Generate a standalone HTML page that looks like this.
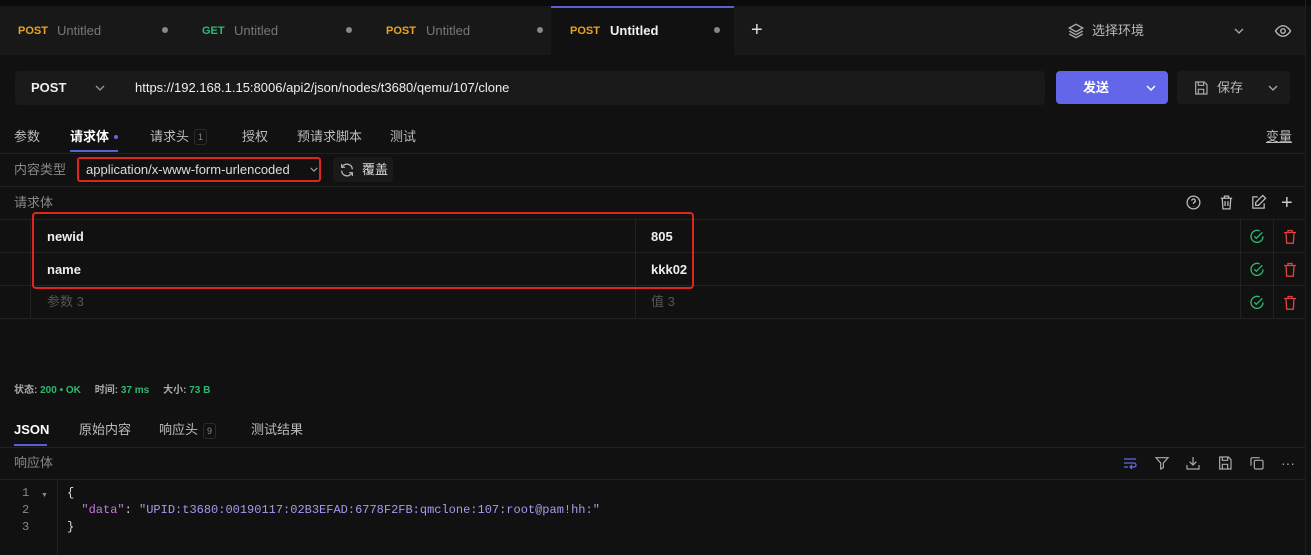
<!DOCTYPE html>
<html><head><meta charset="utf-8"><style>
*{box-sizing:border-box;margin:0;padding:0}
body{width:1311px;height:555px;background:#111111;font-family:"Liberation Sans","Noto Sans CJK SC",sans-serif;color:#d0d0d0;position:relative;overflow:hidden;font-size:13px}
.a{position:absolute;white-space:nowrap;line-height:15px}
.hl{position:absolute;height:1px;background:#222}
.vl{position:absolute;width:1px;background:#222}
.m{font-family:"Liberation Mono","DejaVu Sans Mono",monospace}
svg{position:absolute}
</style></head><body>
<div class="a" style="left:0;top:0;width:1311px;height:6px;background:#0b0b0b"></div>
<div class="a" style="left:0;top:6px;width:1305px;height:49px;background:#181818"></div>
<div class="a" style="left:551px;top:6px;width:183px;height:49px;background:#111;border-top:2px solid #5b5fd6"></div>
<div class="vl" style="left:1305px;top:0;height:555px;background:#1e1e1e"></div>

<div class="a" style="left:18px;top:24px;font-size:11px;font-weight:bold;color:#e5a52a">POST</div>
<div class="a" style="left:57px;top:23px;color:#777">Untitled</div>
<div class="a" style="left:162px;top:27px;width:6px;height:6px;border-radius:3px;background:#888"></div>
<div class="a" style="left:202px;top:24px;font-size:11px;font-weight:bold;color:#2eb872">GET</div>
<div class="a" style="left:234px;top:23px;color:#777">Untitled</div>
<div class="a" style="left:346px;top:27px;width:6px;height:6px;border-radius:3px;background:#888"></div>
<div class="a" style="left:386px;top:24px;font-size:11px;font-weight:bold;color:#e5a52a">POST</div>
<div class="a" style="left:426px;top:23px;color:#777">Untitled</div>
<div class="a" style="left:537px;top:27px;width:6px;height:6px;border-radius:3px;background:#888"></div>
<div class="a" style="left:570px;top:24px;font-size:11px;font-weight:bold;color:#e5a52a">POST</div>
<div class="a" style="left:610px;top:23px;color:#f0f0f0;font-weight:bold">Untitled</div>
<div class="a" style="left:714px;top:27px;width:6px;height:6px;border-radius:3px;background:#888"></div>
<div class="a" style="left:751px;top:20px;font-size:20px;line-height:20px;color:#ddd">+</div>

<svg style="left:1067px;top:22px" width="18" height="18" viewBox="0 0 24 24" fill="none" stroke="#aaa" stroke-width="1.8"><path d="M12 3 3 8l9 5 9-5z"/><path d="M3 12l9 5 9-5"/><path d="M3 16l9 5 9-5"/></svg>
<div class="a" style="left:1092px;top:23px;color:#bbb">选择环境</div>
<svg style="left:1233px;top:26px" width="12" height="10" viewBox="0 0 12 10" fill="none" stroke="#aaa" stroke-width="1.3"><path d="M2 3l4 4 4-4"/></svg>
<svg style="left:1274px;top:22px" width="18" height="18" viewBox="0 0 24 24" fill="none" stroke="#bbb" stroke-width="1.8"><path d="M2 12s4-7 10-7 10 7 10 7-4 7-10 7S2 12 2 12z"/><circle cx="12" cy="12" r="3"/></svg>

<div class="a" style="left:15px;top:71px;width:1030px;height:34px;background:#1a1a1a;border-radius:4px"></div>
<div class="a" style="left:31px;top:80px;font-weight:bold;color:#eee">POST</div>
<svg style="left:94px;top:83px" width="12" height="10" viewBox="0 0 12 10" fill="none" stroke="#999" stroke-width="1.3"><path d="M2 3l4 4 4-4"/></svg>
<div class="a" style="left:135px;top:80px;color:#eee">https://192.168.1.15:8006/api2/json/nodes/t3680/qemu/107/clone</div>
<div class="a" style="left:1056px;top:71px;width:112px;height:33px;background:#6366e8;border-radius:4px"></div>
<div class="a" style="left:1083px;top:80px;color:#fff;font-weight:bold">发送</div>
<svg style="left:1145px;top:83px" width="12" height="10" viewBox="0 0 12 10" fill="none" stroke="#fff" stroke-width="1.5"><path d="M2 3l4 4 4-4"/></svg>
<div class="a" style="left:1177px;top:71px;width:113px;height:33px;background:#1a1a1a;border-radius:4px"></div>
<svg style="left:1193px;top:80px" width="16" height="16" viewBox="0 0 24 24" fill="none" stroke="#aaa" stroke-width="1.8"><path d="M4 3h13l4 4v14H4z"/><path d="M8 3v5h8V3M8 21v-7h8v7"/></svg>
<div class="a" style="left:1217px;top:80px;color:#bbb">保存</div>
<svg style="left:1267px;top:83px" width="12" height="10" viewBox="0 0 12 10" fill="none" stroke="#aaa" stroke-width="1.3"><path d="M2 3l4 4 4-4"/></svg>

<div class="a" style="left:14px;top:129px;color:#bbb">参数</div>
<div class="a" style="left:70px;top:129px;color:#fff;font-weight:bold">请求体</div>
<div class="a" style="left:114px;top:135px;width:4px;height:4px;border-radius:2px;background:#6366e8"></div>
<div class="a" style="left:70px;top:150px;width:48px;height:2px;background:#5b5fd6"></div>
<div class="a" style="left:150px;top:129px;color:#bbb">请求头</div>
<div class="a" style="left:194px;top:129px;width:13px;height:16px;border:1px solid #2a2a2a;border-radius:3px;font-size:9px;color:#888;text-align:center;line-height:14px">1</div>
<div class="a" style="left:242px;top:129px;color:#bbb">授权</div>
<div class="a" style="left:297px;top:129px;color:#bbb">预请求脚本</div>
<div class="a" style="left:390px;top:129px;color:#bbb">测试</div>
<div class="a" style="left:1266px;top:129px;color:#bbb;text-decoration:underline">变量</div>
<div class="hl" style="left:0;top:153px;width:1305px"></div>

<div class="a" style="left:14px;top:162px;color:#888">内容类型</div>
<div class="a" style="left:77px;top:157px;width:244px;height:25px;border:2px solid #e0251c;border-radius:3px"></div>
<div class="a" style="left:86px;top:162px;color:#ddd">application/x-www-form-urlencoded</div>
<svg style="left:309px;top:165px" width="10" height="9" viewBox="0 0 12 10" fill="none" stroke="#aaa" stroke-width="1.3"><path d="M2 3l4 4 4-4"/></svg>
<div class="a" style="left:333px;top:157px;width:60px;height:25px;background:#1a1a1a;border-radius:4px"></div>
<svg style="left:339px;top:162px" width="16" height="16" viewBox="0 0 24 24" fill="none" stroke="#bbb" stroke-width="1.8"><path d="M20 11A8 8 0 0 0 6 6L4 8M4 13a8 8 0 0 0 14 5l2-2"/><path d="M4 3v5h5M20 21v-5h-5"/></svg>
<div class="a" style="left:362px;top:162px;color:#ddd">覆盖</div>
<div class="hl" style="left:0;top:186px;width:1305px"></div>

<div class="a" style="left:14px;top:195px;color:#888">请求体</div>
<svg style="left:1185px;top:194px" width="17" height="17" viewBox="0 0 24 24" fill="none" stroke="#bbb" stroke-width="1.8"><circle cx="12" cy="12" r="9"/><path d="M9.5 9.5a2.5 2.5 0 1 1 3.5 2.3c-.6.3-1 .8-1 1.5V14M12 17v.5"/></svg>
<svg style="left:1218px;top:194px" width="17" height="17" viewBox="0 0 24 24" fill="none" stroke="#bbb" stroke-width="1.8"><path d="M4 6h16M9 6V3h6v3M6 6l1 15h10l1-15M10 10v7M14 10v7"/></svg>
<svg style="left:1250px;top:194px" width="17" height="17" viewBox="0 0 24 24" fill="none" stroke="#bbb" stroke-width="1.8"><path d="M11 4H4v16h16v-7"/><path d="M18 2l4 4-10 10H8v-4z"/></svg>
<div class="a" style="left:1281px;top:193px;font-size:20px;line-height:20px;color:#ccc">+</div>

<div class="hl" style="left:0;top:219px;width:1305px"></div>
<div class="hl" style="left:0;top:252px;width:1305px"></div>
<div class="hl" style="left:0;top:285px;width:1305px"></div>
<div class="hl" style="left:0;top:318px;width:1305px"></div>
<div class="vl" style="left:30px;top:219px;height:100px"></div>
<div class="vl" style="left:635px;top:219px;height:100px"></div>
<div class="vl" style="left:1240px;top:219px;height:100px"></div>
<div class="vl" style="left:1273px;top:219px;height:100px"></div>
<div class="a" style="left:32px;top:212px;width:662px;height:77px;border:2px solid #e0251c;border-radius:4px"></div>
<div class="a" style="left:47px;top:229px;color:#eee;font-weight:bold">newid</div>
<div class="a" style="left:651px;top:229px;color:#eee;font-weight:bold">805</div>
<div class="a" style="left:47px;top:262px;color:#eee;font-weight:bold">name</div>
<div class="a" style="left:651px;top:262px;color:#eee;font-weight:bold">kkk02</div>
<div class="a" style="left:47px;top:294px;color:#555">参数 3</div>
<div class="a" style="left:651px;top:294px;color:#555">值 3</div>
<svg style="left:1249px;top:229px" width="16" height="16" viewBox="0 0 24 24" fill="none" stroke="#2eb872" stroke-width="2"><path d="M21 11a9 9 0 1 1-5-8"/><path d="M8 11l3 3 9-9"/></svg>
<svg style="left:1249px;top:262px" width="16" height="16" viewBox="0 0 24 24" fill="none" stroke="#2eb872" stroke-width="2"><path d="M21 11a9 9 0 1 1-5-8"/><path d="M8 11l3 3 9-9"/></svg>
<svg style="left:1249px;top:295px" width="16" height="16" viewBox="0 0 24 24" fill="none" stroke="#2eb872" stroke-width="2"><path d="M21 11a9 9 0 1 1-5-8"/><path d="M8 11l3 3 9-9"/></svg>
<svg style="left:1282px;top:228px" width="16" height="17" viewBox="0 0 24 24" fill="none" stroke="#e04040" stroke-width="2"><path d="M3 6h18M9 6V3h6v3M6 6l1 16h10l1-16"/></svg>
<svg style="left:1282px;top:261px" width="16" height="17" viewBox="0 0 24 24" fill="none" stroke="#e04040" stroke-width="2"><path d="M3 6h18M9 6V3h6v3M6 6l1 16h10l1-16"/></svg>
<svg style="left:1282px;top:294px" width="16" height="17" viewBox="0 0 24 24" fill="none" stroke="#e04040" stroke-width="2"><path d="M3 6h18M9 6V3h6v3M6 6l1 16h10l1-16"/></svg>

<div class="a" style="left:14px;top:383px;font-size:10px;color:#aaa;font-weight:bold">状态: <span style="color:#2eb872">200 • OK</span>&nbsp;&nbsp;&nbsp;&nbsp; 时间: <span style="color:#2eb872">37 ms</span>&nbsp;&nbsp;&nbsp;&nbsp; 大小: <span style="color:#2eb872">73 B</span></div>

<div class="a" style="left:14px;top:422px;color:#fff;font-weight:bold">JSON</div>
<div class="a" style="left:14px;top:444px;width:33px;height:2px;background:#5b5fd6"></div>
<div class="a" style="left:79px;top:422px;color:#bbb">原始内容</div>
<div class="a" style="left:159px;top:422px;color:#bbb">响应头</div>
<div class="a" style="left:203px;top:423px;width:13px;height:16px;border:1px solid #2a2a2a;border-radius:3px;font-size:9px;color:#888;text-align:center;line-height:14px">9</div>
<div class="a" style="left:251px;top:422px;color:#bbb">测试结果</div>
<div class="hl" style="left:0;top:447px;width:1305px"></div>
<div class="a" style="left:14px;top:455px;color:#888">响应体</div>
<svg style="left:1122px;top:455px" width="16" height="16" viewBox="0 0 24 24" fill="none" stroke="#6366e8" stroke-width="2"><path d="M3 6h18M3 12h15a3 3 0 0 1 0 6h-5M3 18h6M15 15l-3 3 3 3"/></svg>
<svg style="left:1154px;top:455px" width="16" height="16" viewBox="0 0 24 24" fill="none" stroke="#aaa" stroke-width="1.8"><path d="M3 4h18l-7 8v7l-4 2v-9z"/></svg>
<svg style="left:1185px;top:455px" width="16" height="16" viewBox="0 0 24 24" fill="none" stroke="#aaa" stroke-width="1.8"><path d="M12 3v12M7 10l5 5 5-5M3 15v6h18v-6"/></svg>
<svg style="left:1217px;top:455px" width="16" height="16" viewBox="0 0 24 24" fill="none" stroke="#aaa" stroke-width="1.8"><path d="M4 3h13l4 4v14H4z"/><path d="M8 3v5h8V3M8 21v-7h8v7"/></svg>
<svg style="left:1249px;top:455px" width="16" height="16" viewBox="0 0 24 24" fill="none" stroke="#aaa" stroke-width="1.8"><rect x="8" y="8" width="13" height="13" rx="2"/><path d="M16 4H5a2 2 0 0 0-2 2v10"/></svg>
<div class="a" style="left:1281px;top:456px;color:#aaa;font-size:14px">···</div>
<div class="hl" style="left:0;top:479px;width:1305px"></div>
<div class="vl" style="left:57px;top:480px;height:75px"></div>
<div class="a m" style="left:22px;top:485px;font-size:12px;color:#888;line-height:17px">1<br>2<br>3</div>
<div class="a" style="left:41px;top:488px;font-size:7px;color:#888">▼</div>
<div class="a m" style="left:67px;top:485px;font-size:12px;color:#ddd;line-height:17px">{<br>&nbsp;&nbsp;<span style="color:#c678dd">"data"</span>: <span style="color:#a49bf0">"UPID:t3680:00190117:02B3EFAD:6778F2FB:qmclone:107:root@pam!hh:"</span><br>}</div>
</body></html>
